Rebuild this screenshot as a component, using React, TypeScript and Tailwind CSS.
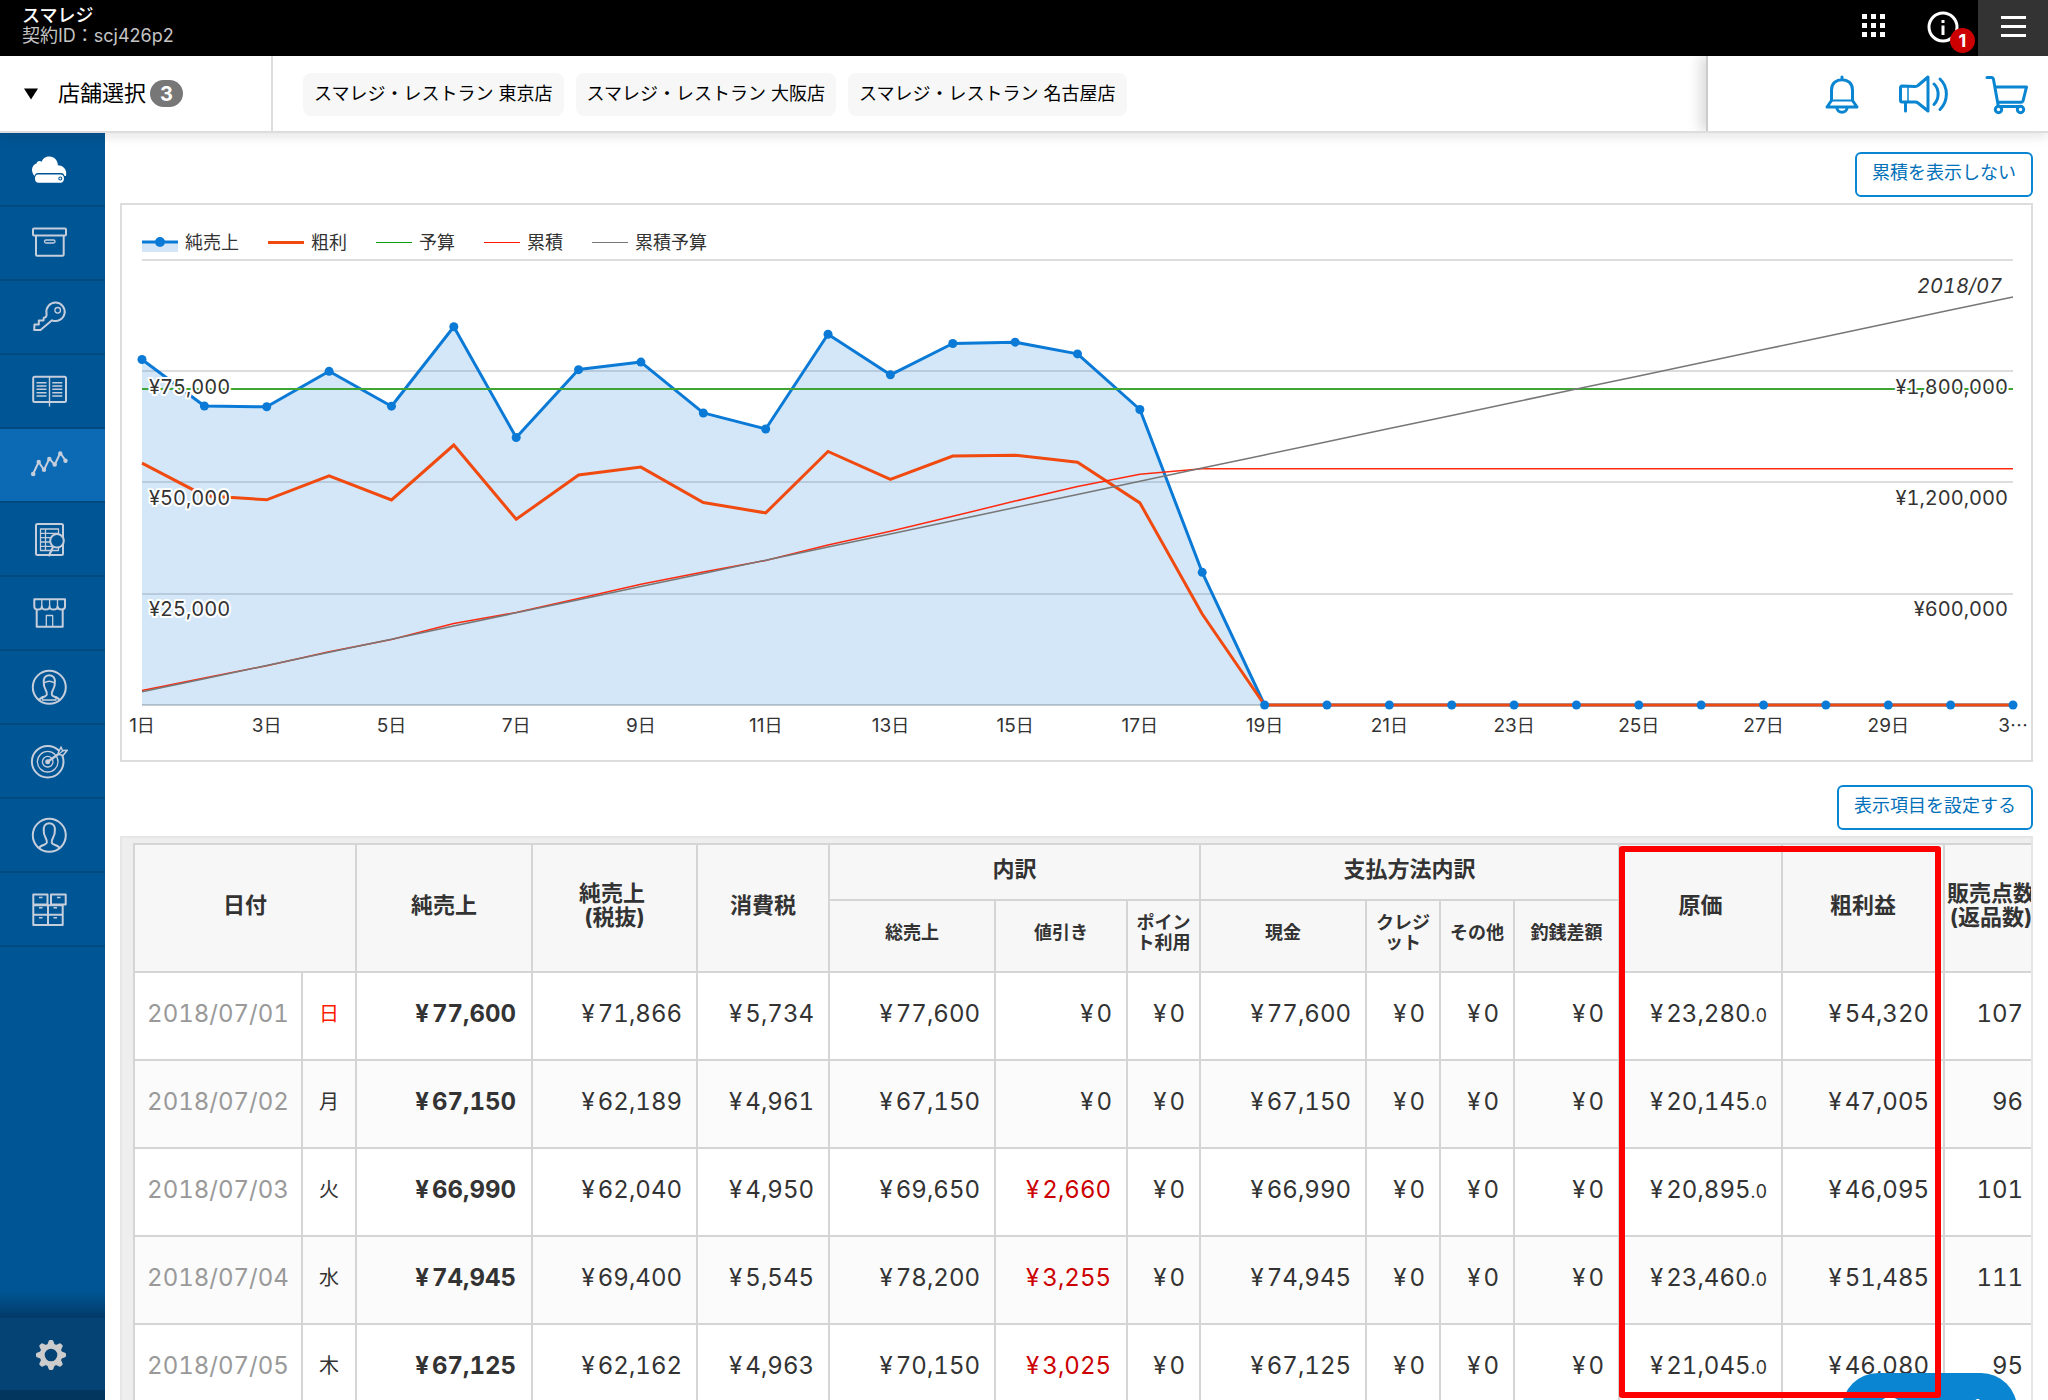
import React from "react";

const stores = ["スマレジ・レストラン 東京店", "スマレジ・レストラン 大阪店", "スマレジ・レストラン 名古屋店"];

const person = (
  <path d="M8 31.5C9 27.500 15.500 28.500 15.800 25.500C16 23 15.600 22.500 14.500 20.500C13.600 18.800 12.600 17 12.800 14.500C12 9.500 14 6.200 18.300 6.200C22.600 6.200 24.600 9.500 23.800 14.500C24 17 23 18.800 22.100 20.500C21 22.500 20.600 23 20.800 25.500C21.100 28.500 27.600 27.500 28.600 31.500" />
);

const icons: { label: string; art: React.ReactNode }[] = [
  {
    label: "ホーム",
    art: (
      <g stroke="none" fill="#fff">
        <path d="M3.500 25C-.5 20.500 .5 14 5.500 12.500C6.200 9.800 9.300 9.500 10.800 10.800C12.500 4 22.500 3.800 25.500 9.500C26.500 11.200 27 12.800 26.800 14.300C32 14.500 36.500 18.500 35 25L33.500 25C33 23 32 22 30 22L7 22C5 22 4 23 3.500 25Z" />
        <path fillRule="evenodd" d="M7 23.500H30Q33 24 33 27.500T30 31.700H7Q4 31.500 4 27.500T7 23.500ZM29.300 25.500A2 2 0 1 0 29.300 29.500A2 2 0 1 0 29.300 25.500Z" />
        <circle cx="29.300" cy="27.500" r="1" />
      </g>
    ),
  },
  {
    label: "商品",
    art: (
      <>
        <rect x="2" y="3.500" width="33" height="7" rx="1" />
        <path d="M5 10.500V29.500Q5 30.700 6 30.700H31.500Q32.700 30.700 32.700 29.500V10.500" />
        <rect x="13.500" y="15" width="10.500" height="3" rx="1.500" strokeWidth="1.300" />
      </>
    ),
  },
  {
    label: "権限",
    art: (
      <>
        <path d="M15.500 14.500A9.200 9.200 0 1 1 21 21.300L9.500 31H3.200L3.500 25.500H7.800V21.500H12.500L12.800 18.800C15.500 18.500 15.800 16.500 15.500 14.500Z" />
        <circle cx="26.700" cy="11.300" r="2.800" strokeWidth="1.300" />
      </>
    ),
  },
  {
    label: "台帳",
    art: (
      <>
        <rect x="2.200" y="3.700" width="32.800" height="25.300" rx="1.500" />
        <path strokeWidth="1.400" d="M18.500 3.500V33.500M5.500 9.700H15.500M5.500 13H15.500M5.500 16.300H15.500M5.500 19.700H15.500M5.500 23H15.500M21.300 9.700H31.300M21.300 13H31.300M21.300 16.300H31.300M21.300 19.700H31.300M21.300 23H31.300" />
      </>
    ),
  },
  {
    label: "売上分析",
    art: (
      <>
        <path d="M2 27L7.700 15L13 23L18.300 11.700L23.700 17.700L29.300 6L34.700 13.700" />
        <g stroke="none" fill="#c6cedc">
          <circle cx="2.200" cy="27" r="2.300" />
          <circle cx="7.700" cy="15" r="2.200" />
          <circle cx="13" cy="22.700" r="2.200" />
          <circle cx="18.300" cy="12" r="2.200" />
          <circle cx="23.700" cy="17.500" r="2.200" />
          <circle cx="29.300" cy="6.500" r="2.200" />
          <circle cx="34.500" cy="13.700" r="2.200" />
        </g>
      </>
    ),
  },
  {
    label: "レポート",
    art: (
      <>
        <rect x="5" y="3" width="27" height="31" rx="1.500" />
        <path strokeWidth="1.300" d="M9.500 8H27.500V29.500H9.500ZM9.500 12.300H27.500M9.500 16.700H27.500M9.500 21H27.500M9.500 25.300H27.500M14.500 8V29.500" />
        <circle cx="26" cy="19.800" r="6.800" fill="#005594" />
        <path d="M22 26L17.700 35.300" strokeWidth="2.200" />
      </>
    ),
  },
  {
    label: "店舗",
    art: (
      <>
        <path d="M3.300 4.300H34V11.500Q34 14.500 30.500 14.500T26.500 11.500Q26.500 14.500 22.500 14.500T18.600 11.500Q18.600 14.500 14.700 14.500T10.800 11.500Q10.800 14.500 7 14.500T3.300 11.500Z" />
        <path d="M10.800 4.500V11.500M18.600 4.500V11.500M26.500 4.500V11.500" strokeWidth="1.300" />
        <path d="M5.700 14V31.700H31.700V14" />
        <path d="M15.300 31.500V20.500H21.700V31.500" strokeWidth="1.300" />
      </>
    ),
  },
  {
    label: "スタッフ",
    art: (
      <>
        <circle cx="18.300" cy="18.300" r="16.500" />
        {person}
        <path strokeWidth="1.300" d="M13 14Q18.300 10.500 23.600 14M11.500 27V31H25V27" />
      </>
    ),
  },
  {
    label: "目標",
    art: (
      <>
        <circle cx="16.700" cy="18.700" r="15.800" />
        <circle cx="16.700" cy="18.700" r="10.300" strokeWidth="1.300" />
        <circle cx="16.700" cy="18.700" r="5.300" strokeWidth="1.300" />
        <circle cx="16.700" cy="18.700" r="2.500" fill="#c6cedc" stroke="none" />
        <path d="M17 18.500L29 10" strokeWidth="2.200" />
        <path d="M27 10.500L30 4L31.500 7.500L36.300 7.300L32 12.500L27 11" strokeWidth="1.500" fill="#005594" />
        <path d="M27 11.500L32.500 7.500" strokeWidth="1.300" />
      </>
    ),
  },
  {
    label: "会員",
    art: (
      <>
        <circle cx="18.300" cy="18.300" r="16.500" />
        {person}
      </>
    ),
  },
  {
    label: "在庫",
    art: (
      <>
        <path d="M2.300 3.500H16.500V13.500H2.300ZM20 3.500H34.700V13.500H20ZM2.300 14.200H17V23.800H2.300ZM17 14.200H31.700V23.800H17ZM2.300 23.800H17V34H2.300ZM17 23.800H31.700V34H17Z" />
        <path strokeWidth="1.500" d="M8 6.500H11.500M26 6.500H29.500M8 16.800H11.500M22.500 16.800H26M8 26.800H11.500M22.500 26.800H26" />
      </>
    ),
  },
];

const sales = [77600, 67150, 66990, 74945, 67125, 84950, 60085, 75330, 77030, 65600, 62000, 83270, 74160, 81200, 81500, 78860, 66370, 29800, 0, 0, 0, 0, 0, 0, 0, 0, 0, 0, 0, 0, 0];
const profit = [54320, 47005, 46095, 51485, 46080, 58400, 41720, 51660, 53430, 45485, 43160, 56950, 50675, 55900, 56120, 54530, 45400, 20450, 0, 0, 0, 0, 0, 0, 0, 0, 0, 0, 0, 0, 0];
const monthlyBudget = 2200000;
const days = sales.length;

const LEFT = 20;
const RIGHT = 1891;
const BASE = 449;
const STEP = 111.3;
const px = (i: number) => LEFT + ((RIGHT - LEFT) * i) / (days - 1);
const py = (v: number, unit = 25000) => BASE - (v / unit) * STEP;
const line = (values: number[], unit?: number) =>
  values.map((v, i) => `${px(i).toFixed(1)},${py(v, unit).toFixed(1)}`).join(" ");

const cumulative = sales.map((_, i) => sales.slice(0, i + 1).reduce((a, b) => a + b, 0));
const cumulativeBudget = sales.map((_, i) => (monthlyBudget / days) * (i + 1));

const legend = [
  { name: "純売上", kind: "area" },
  { name: "粗利", kind: "bg-[#f04a10] h-[3px]" },
  { name: "予算", kind: "bg-[#109c10] h-px" },
  { name: "累積", kind: "bg-[#ff1800] h-px" },
  { name: "累積予算", kind: "bg-[#777777] h-px" },
];

function Chart() {
  return (
    <section className="border-2 border-[#dddddd] bg-white">
      <ul className="flex gap-[29px] pt-[23px] pl-5 text-[18px] text-[#333333]">
        {legend.map((l) => (
          <li key={l.name} className="flex h-7 items-center gap-[7px]">
            {l.kind === "area" ? (
              <svg width="36" height="28" aria-hidden="true">
                <rect y="14" width="36" height="10" fill="#d3e5f6" />
                <path d="M0 14H36" stroke="#0a7ad6" strokeWidth="3" />
                <circle cx="18" cy="14" r="5" fill="#0a7ad6" />
              </svg>
            ) : (
              <span className={`w-9 ${l.kind}`} />
            )}
            {l.name}
          </li>
        ))}
      </ul>
      <svg viewBox="0 0 1909 504" className="block w-full" role="img" aria-label="2018/07 売上グラフ">
        {[0, 1, 2, 3, 4].map((k) => (
          <path key={k} d={`M${LEFT} ${Math.round(BASE - k * STEP)}H${RIGHT}`} stroke={k ? "#dddddd" : "#cccccc"} strokeWidth="2" />
        ))}
        <polygon points={`${LEFT},${BASE} ${line(sales)} ${RIGHT},${BASE}`} fill="#0a7ad6" fillOpacity="0.18" />
        <g fill="none" strokeLinejoin="round">
          <polyline points={line(sales)} stroke="#0a7ad6" strokeWidth="3" />
          <path d={`M${LEFT} 133H${RIGHT}`} stroke="#3fa535" strokeWidth="2" />
          <polyline points={line(profit)} stroke="#f04a10" strokeWidth="3" strokeLinejoin="miter" />
          <polyline points={line(cumulative, 600000)} stroke="#ff2a10" strokeWidth="1.500" />
          <polyline points={line(cumulativeBudget, 600000)} stroke="#777777" strokeWidth="1.500" />
        </g>
        {sales.map((v, i) => (
          <circle key={i} cx={px(i)} cy={py(v)} r="4.500" fill="#0a7ad6" />
        ))}
        <g fill="#333333">
          <g className="text-[20px] tabular-nums">
            {[1, 2, 3].map((k) => (
              <g key={k} stroke="#ffffff" strokeWidth="4" strokeLinejoin="round" paintOrder="stroke">
                <text x="27" y={471 - k * 111}>¥{(k * 25000).toLocaleString("en-US")}</text>
                <text x="1886" y={471 - k * 111} textAnchor="end">¥{(k * 600000).toLocaleString("en-US")}</text>
              </g>
            ))}
            <text x="1880" y="37" textAnchor="end" className="italic">2018/07</text>
          </g>
          <g className="text-[19px]">
            {sales.map((_, i) =>
              i % 2 ? null : (
                <text key={i} x={px(i)} y="476" textAnchor="middle">
                  {i === 30 ? 3 : i + 1}
                  <tspan className="font-['Noto_Sans_CJK_JP'] text-[18px]">{i === 30 ? "…" : "日"}</tspan>
                </text>
              )
            )}
          </g>
        </g>
      </svg>
    </section>
  );
}

const rows: string[][] = [
  ["2018/07/01", "日", "77,600", "71,866", "5,734", "77,600", "0", "0", "77,600", "0", "0", "0", "23,280", "54,320", "107"],
  ["2018/07/02", "月", "67,150", "62,189", "4,961", "67,150", "0", "0", "67,150", "0", "0", "0", "20,145", "47,005", "96"],
  ["2018/07/03", "火", "66,990", "62,040", "4,950", "69,650", "2,660", "0", "66,990", "0", "0", "0", "20,895", "46,095", "101"],
  ["2018/07/04", "水", "74,945", "69,400", "5,545", "78,200", "3,255", "0", "74,945", "0", "0", "0", "23,460", "51,485", "111"],
  ["2018/07/05", "木", "67,125", "62,162", "4,963", "70,150", "3,025", "0", "67,125", "0", "0", "0", "21,045", "46,080", "95"],
];
const columnWidths = [168, 54, 176, 165, 132, 166, 132, 73, 166, 74, 74, 105, 163, 162, 94];

function cellClass(i: number, value: string) {
  if (i === 0) return "text-center text-[#999999]";
  if (i === 1) return value === "日" ? "text-center text-[20px] text-[#ff1a00]" : "text-center text-[20px]";
  if (i === 2) return "pr-[15px] text-right font-bold";
  if (i === 6 && value !== "0") return "pr-[15px] text-right text-[#cc0000]";
  return "pr-[14px] text-right";
}

function SalesTable() {
  const th = "border-2 border-[#d5d5d5] bg-[#f7f7f7] p-0 pb-1.5 font-bold";
  return (
    <section className="overflow-hidden border-2 border-b-0 border-[#e6e6e6] bg-[#eeeeee] pt-[5px] pl-[11px]">
      <div className="relative w-[1906px]">
        <table className="w-[1906px] table-fixed border-collapse text-[#333333]">
          <colgroup>
            {columnWidths.map((w, i) => (
              <col key={i} style={{ width: w }} />
            ))}
          </colgroup>
          <thead className="text-[22px] leading-6">
            <tr className="h-14">
              <th className={th} rowSpan={2} colSpan={2}>日付</th>
              <th className={th} rowSpan={2}>純売上</th>
              <th className={th} rowSpan={2}>純売上&nbsp;<br />(税抜)</th>
              <th className={th} rowSpan={2}>消費税</th>
              <th className={th} colSpan={3}>内訳</th>
              <th className={th} colSpan={4}>支払方法内訳</th>
              <th className={th} rowSpan={2}>原価</th>
              <th className={th} rowSpan={2}>粗利益</th>
              <th className={`${th} whitespace-nowrap`} rowSpan={2}>販売点数<br />(返品数)</th>
            </tr>
            <tr className="h-[72px] text-[18px] leading-5">
              <th className={th}>総売上</th>
              <th className={th}>値引き</th>
              <th className={th}>ポイン<br />ト利用</th>
              <th className={th}>現金</th>
              <th className={th}>クレジ<br />ット</th>
              <th className={th}>その他</th>
              <th className={th}>釣銭差額</th>
            </tr>
          </thead>
          <tbody className="text-[24px] tabular-nums">
            {rows.map((r) => (
              <tr key={r[0]} className="h-[88px] bg-white even:bg-[#fbfbfb]">
                {r.map((v, i) => (
                  <td key={i} className={`border-2 border-[#d5d5d5] pb-1 ${cellClass(i, v)}`}>
                    {i > 1 && i < 14 && <span className="mr-[3px]">¥</span>}
                    {v}
                    {i === 12 && <small className="text-[18px]">.0</small>}
                  </td>
                ))}
              </tr>
            ))}
          </tbody>
        </table>
        <div className="pointer-events-none absolute top-[3px] left-[1486px] z-20 h-[552px] w-[322px] rounded-[3px] border-6 border-[#ff0000]" />
      </div>
    </section>
  );
}

const outlineButton =
  "h-[45px] rounded-md border-2 border-[#0a85d1] bg-white px-[15px] pb-1 text-[18px] text-[#0070b8]";

export default function App() {
  return (
    <div className="relative flex h-screen flex-col overflow-hidden bg-white font-['Inter','Noto_Sans_CJK_JP',sans-serif] text-black">
      <header className="flex h-14 shrink-0 bg-black text-white">
        <div className="flex-1 pt-1.5 pl-[22px] text-[18px] leading-5">
          <p className="font-medium">スマレジ</p>
          <p className="text-[#c4c4c4]">契約ID：scj426p2</p>
        </div>
        <button aria-label="アプリ一覧" className="mr-[38px] flex w-8 items-center justify-center pb-1">
          <svg width="24" height="24" fill="#fff">
            {[0, 9, 18].map((y) => [0, 9, 18].map((x) => <rect key={`${x}-${y}`} x={x + 1} y={y} width="5" height="5" />))}
          </svg>
        </button>
        <button aria-label="お知らせ 1件" className="relative mr-[19px] w-8 pb-0.5">
          <svg width="32" height="32" viewBox="0 0 32 32" fill="none">
            <circle cx="16" cy="16" r="14" stroke="#fff" strokeWidth="3" />
            <path d="M16 9V12M16 14.500V24" stroke="#fff" strokeWidth="3" />
          </svg>
          <span className="absolute top-7 left-[23px] flex size-[25px] items-center justify-center rounded-full bg-[#cc0000] text-[18px] font-bold">1</span>
        </button>
        <button aria-label="メニュー" className="flex w-[70px] items-center justify-center bg-[#333333] pb-0.5">
          <svg width="26" height="22" fill="#fff">
            <rect width="25" height="3" x="1" y="0" />
            <rect width="25" height="3" x="1" y="9" />
            <rect width="25" height="3" x="1" y="18" />
          </svg>
        </button>
      </header>

      <div className="relative z-10 flex h-[77px] shrink-0 border-b-2 border-[#dddddd] bg-white shadow-[0_4px_10px_rgba(0,0,0,0.10)]">
        <button className="flex w-[273px] items-center border-r-2 border-[#dddddd] pl-6 text-[22px]">
          <svg width="14" height="12" className="mr-5">
            <path d="M0 0.500H14L7 11.500Z" />
          </svg>
          店舗選択
          <span className="ml-1 flex h-[27px] w-[33px] items-center justify-center rounded-full bg-[#777777] text-[20px] font-bold text-white">3</span>
        </button>
        <ul className="flex flex-1 items-center gap-3 pt-0.5 pl-[30px] text-[18px]">
          {stores.map((s) => (
            <li key={s} className="flex h-[43px] items-center rounded-lg bg-[#f7f7f7] px-[11px] pb-0.5 whitespace-nowrap">{s}</li>
          ))}
        </ul>
        <div className="flex w-[342px] items-center border-l-2 border-[#cccccc] bg-white pt-0.5 pl-[117px] shadow-[-6px_0_12px_rgba(0,0,0,0.14)] [clip-path:inset(0_0_0_-24px)]">
          <button aria-label="通知">
            <svg width="34" height="40" viewBox="0 0 34 40" fill="none" stroke="#0a85d1" strokeWidth="3" strokeLinejoin="round" strokeLinecap="round">
              <path d="M17 2V4M6.500 25.500V15C6.500 1.200 27.500 1.200 27.500 15V25.500L32 32H2L6.500 25.500Z" />
              <path d="M6.500 25.500H27.500" strokeWidth="2" />
              <path d="M12 33C12 38.500 22 38.500 22 33" />
            </svg>
          </button>
          <button aria-label="お知らせ音声" className="ml-10">
            <svg width="50" height="40" viewBox="0 0 50 40" fill="none" stroke="#0a85d1" strokeWidth="3" strokeLinejoin="round" strokeLinecap="round">
              <path d="M3 11Q1.500 11 1.500 13V25Q1.500 27 3 27H16Q18 27 19 28L29 36V2L19 10.500Q18 11.500 16 11.500Z" />
              <path d="M9 11.500V27" strokeWidth="1.500" />
              <path d="M6.500 27.500V36" />
              <path d="M35 9C40.500 14 40.500 24 35 29.500M41 4C49.500 12 49.500 26 41 34.500" />
            </svg>
          </button>
          <button aria-label="カート" className="ml-9">
            <svg width="44" height="40" viewBox="0 0 44 40" fill="none" stroke="#0a85d1" strokeWidth="3" strokeLinejoin="round" strokeLinecap="round">
              <path d="M2 2.500H6.500Q8 2.500 8.500 4.500L13 29.500M10 12H41.500L38 26Q37.500 27.300 36 27.300H13M13 31.500H36" />
              <circle cx="13.500" cy="34.500" r="3.200" fill="#fff" />
              <circle cx="35.500" cy="34.500" r="3.200" fill="#fff" />
            </svg>
          </button>
        </div>
      </div>

      <div className="flex min-h-0 flex-1">
        <nav className="flex w-[105px] shrink-0 flex-col bg-[#005594]">
          {icons.map((it) => (
            <a
              key={it.label}
              href="#"
              aria-label={it.label}
              className={`flex h-[74px] shrink-0 items-center justify-center border-b-2 border-[#004a80] pr-[7px] ${it.label === "売上分析" ? "bg-[#0c6ab4]" : ""}`}
            >
              <svg width="36" height="36" viewBox="0 0 36 36" className="overflow-visible" fill="none" stroke="#c6cedc" strokeWidth="2" strokeLinejoin="round">
                {it.art}
              </svg>
            </a>
          ))}
          <div className="flex-1" />
          <div className="h-[26px] bg-linear-to-b from-[#005594] to-[#023a68]" />
          <a href="#" aria-label="設定" className="flex h-[82px] items-center justify-center border-b-[10px] border-[#02365f] bg-[#064375] pt-0.5 pr-[3px]">
            <svg width="30" height="30" viewBox="-15 -15 30 30">
              <circle r="8.800" fill="none" stroke="#cccccc" strokeWidth="5" />
              {[0, 45, 90, 135, 180, 225, 270, 315].map((a) => (
                <path key={a} d="M-3.800 -10L-2.300 -14Q-2 -15 -1 -15H1Q2 -15 2.300 -14L3.800 -10Z" fill="#cccccc" transform={`rotate(${a})`} />
              ))}
            </svg>
          </a>
        </nav>

        <main className="min-w-0 flex-1 overflow-hidden px-[15px]">
          <div className="flex justify-end pt-[19px] pb-1.5">
            <button className={outlineButton}>累積を表示しない</button>
          </div>
          <Chart />
          <div className="flex justify-end pt-[23px] pb-1.5">
            <button className={outlineButton}>表示項目を設定する</button>
          </div>
          <SalesTable />
        </main>
      </div>

      <button className="absolute right-[31px] -bottom-[45px] z-10 flex h-[72px] w-[175px] items-center justify-center gap-3 rounded-full bg-[#0a85d1] text-[22px] text-white">
        <svg width="24" height="24" viewBox="0 0 24 24" fill="none" stroke="#fff" strokeWidth="3" aria-hidden="true">
          <circle cx="12" cy="12" r="10.500" />
          <path d="M9 9.500Q9 7 12 7T15 9.500Q15 11 12 12.500V14M12 16V18" strokeWidth="2" />
        </svg>
        ヘルプ
      </button>
    </div>
  );
}
